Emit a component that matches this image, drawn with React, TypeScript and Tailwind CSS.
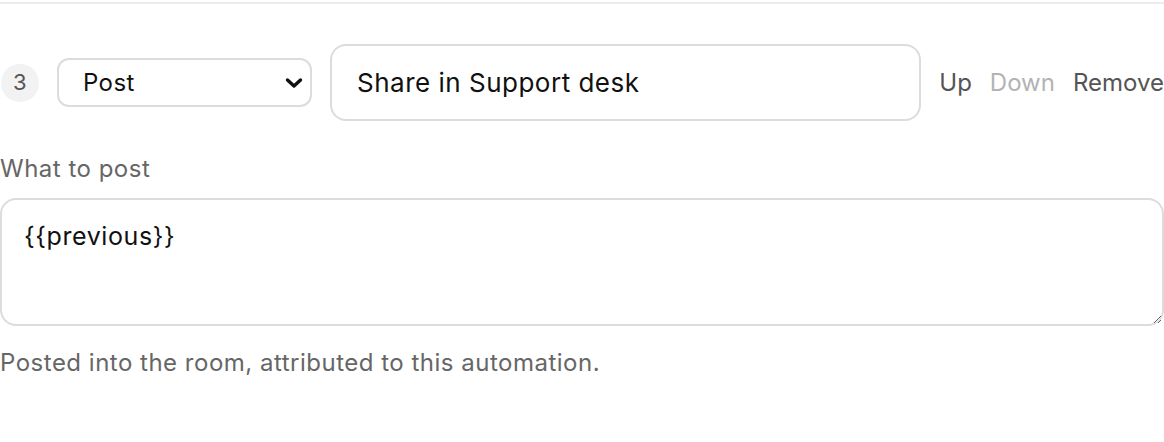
import React from 'react';

const font = { fontFamily: 'Inter, "Noto Sans", sans-serif' };

function StepBadge({ n }: { n: number }) {
  return (
    <div className="flex h-[38px] w-[38px] shrink-0 items-center justify-center rounded-full bg-[#f2f2f2] text-[22px] text-[#555]">
      {n}
    </div>
  );
}

function Chevron() {
  return (
    <svg width="18" height="12" viewBox="0 0 18 12" className="pointer-events-none absolute right-[9px] top-1/2 -translate-y-1/2">
      <path d="M2.5 3 L9 9 L15.5 3" fill="none" stroke="#111" strokeWidth="3.4" strokeLinecap="round" strokeLinejoin="round" />
    </svg>
  );
}

export default function App() {
  return (
    <div className="min-h-[442px] bg-white text-[24px] tracking-[0.4px]" style={font}>
      <div className="mt-[2px] border-t-2 border-[#ececec] pt-[40px]">
        <div className="flex items-center gap-[18px] pl-[1px]">
          <StepBadge n={3} />
          <div className="relative w-[255px] shrink-0">
            <select
              defaultValue="post"
              className="h-[49px] w-full appearance-none rounded-[12px] border-2 border-[#dcdcdc] bg-white pl-[24px] text-[24px] tracking-[0.4px] text-[#111] outline-none"
            >
              <option value="post">Post</option>
            </select>
            <Chevron />
          </div>
          <input
            defaultValue="Share in Support desk"
            className="h-[77px] min-w-0 flex-1 rounded-[16px] border-2 border-[#dcdcdc] bg-white px-[25px] text-[26px] tracking-[0.5px] text-[#111] outline-none"
          />
          <div className="flex shrink-0 items-center gap-[18px] text-[24px] tracking-[0px]">
            <button className="text-[#555]">Up</button>
            <button className="text-[#b3b3b3]" disabled>
              Down
            </button>
            <button className="text-[#555]">Remove</button>
          </div>
        </div>

        <div className="mt-[31px] flex flex-col">
          <label className="text-[24px] leading-[33px] tracking-[0.5px] text-[#666]">What to post</label>
          <textarea
            defaultValue="{{previous}}"
            className="mt-[13px] h-[128px] w-full resize-y rounded-[16px] border-2 border-[#dcdcdc] bg-white px-[22px] pt-[18px] text-[25px] leading-[36px] tracking-[0.6px] text-[#111] outline-none"
          />
          <p className="mt-[20px] text-[24px] leading-[33px] tracking-[0.5px] text-[#666]">
            Posted into the room, attributed to this automation.
          </p>
        </div>
      </div>
    </div>
  );
}
